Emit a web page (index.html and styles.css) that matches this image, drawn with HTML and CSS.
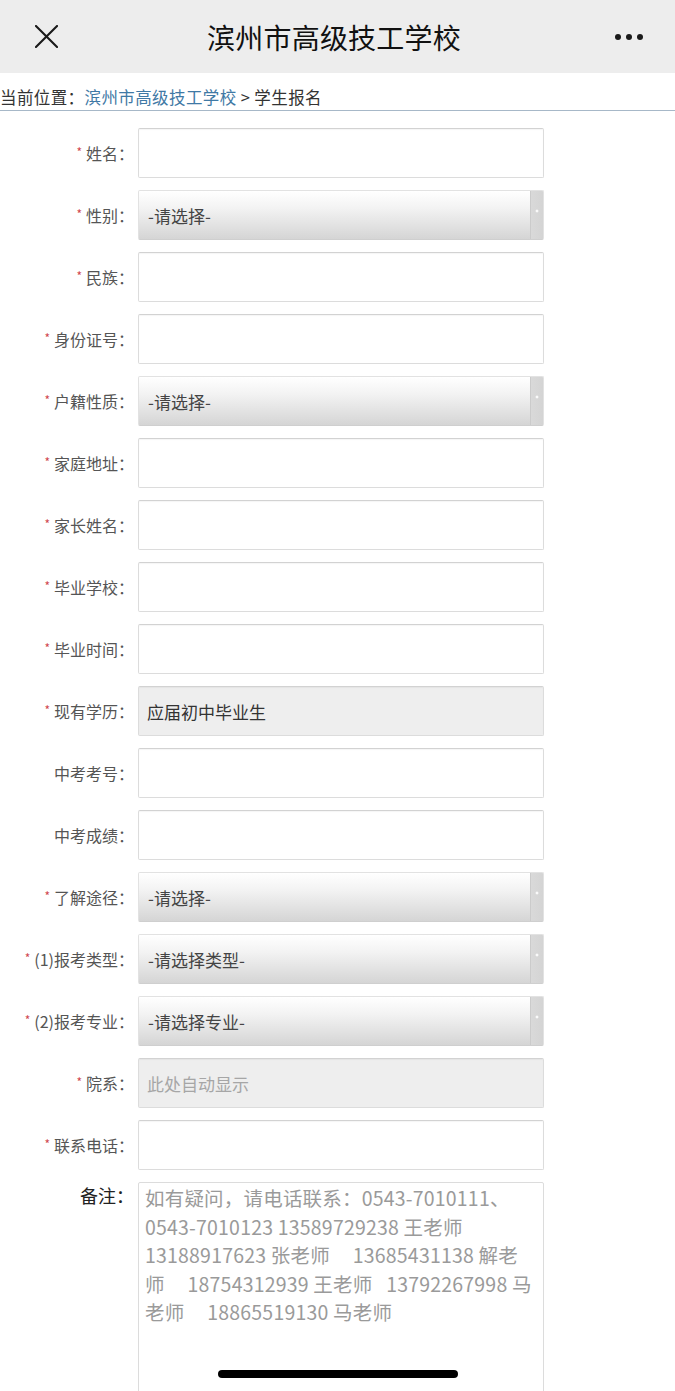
FILE: index.html
```html
<!DOCTYPE html>
<html lang="zh-CN">
<head>
<meta charset="utf-8">
<title>滨州市高级技工学校</title>
<link rel="stylesheet" href="styles.css">
</head>
<body>
<header class="topbar">
  <svg class="close" viewBox="0 0 24 24" width="24" height="24"><path d="M1 1 L23 23 M23 1 L1 23" stroke="#1a1a1a" stroke-width="2.2" fill="none" stroke-linecap="round"/></svg>
  <h1 class="title">滨州市高级技工学校</h1>
  <svg class="more" viewBox="0 0 30 8" width="30" height="8"><circle cx="4" cy="4" r="3" fill="#1a1a1a"/><circle cx="15" cy="4" r="3" fill="#1a1a1a"/><circle cx="26" cy="4" r="3" fill="#1a1a1a"/></svg>
</header>
<nav class="crumb">当前位置：<a class="crumb-link">滨州市高级技工学校</a> &gt; 学生报名</nav>
<form class="form">
  <div class="row"><label class="lbl"><span class="req">*</span>姓名：</label><input class="inp" type="text"></div>
  <div class="row"><label class="lbl"><span class="req">*</span>性别：</label><div class="sel">-请选择-</div></div>
  <div class="row"><label class="lbl"><span class="req">*</span>民族：</label><input class="inp" type="text"></div>
  <div class="row"><label class="lbl"><span class="req">*</span>身份证号：</label><input class="inp" type="text"></div>
  <div class="row"><label class="lbl"><span class="req">*</span>户籍性质：</label><div class="sel">-请选择-</div></div>
  <div class="row"><label class="lbl"><span class="req">*</span>家庭地址：</label><input class="inp" type="text"></div>
  <div class="row"><label class="lbl"><span class="req">*</span>家长姓名：</label><input class="inp" type="text"></div>
  <div class="row"><label class="lbl"><span class="req">*</span>毕业学校：</label><input class="inp" type="text"></div>
  <div class="row"><label class="lbl"><span class="req">*</span>毕业时间：</label><input class="inp" type="text"></div>
  <div class="row"><label class="lbl"><span class="req">*</span>现有学历：</label><div class="inp ro">应届初中毕业生</div></div>
  <div class="row"><label class="lbl">中考考号：</label><input class="inp" type="text"></div>
  <div class="row"><label class="lbl">中考成绩：</label><input class="inp" type="text"></div>
  <div class="row"><label class="lbl"><span class="req">*</span>了解途径：</label><div class="sel">-请选择-</div></div>
  <div class="row"><label class="lbl"><span class="req">*</span>(1)报考类型：</label><div class="sel">-请选择类型-</div></div>
  <div class="row"><label class="lbl"><span class="req">*</span>(2)报考专业：</label><div class="sel">-请选择专业-</div></div>
  <div class="row"><label class="lbl"><span class="req">*</span>院系：</label><div class="inp ro ph">此处自动显示</div></div>
  <div class="row"><label class="lbl"><span class="req">*</span>联系电话：</label><input class="inp" type="text"></div>
  <div class="row row-top"><label class="lbl lbl-note">备注：</label><div class="note">如有疑问，请电话联系：0543-7010111、
0543-7010123 13589729238 王老师
13188917623 张老师     13685431138 解老
师     18754312939 王老师   13792267998 马
老师     18865519130 马老师</div></div>
</form>
<div class="home-bar"></div>
</body>
</html>
```

FILE: styles.css
```css
html, body {
  margin: 0;
  padding: 0;
  overflow: hidden;
  background: #fff;
}
body {
  font-family: "Noto Sans CJK SC", "Noto Sans", sans-serif;
  color: #333;
}
.topbar {
  height: 73px;
  background: #ededed;
  display: flex;
  align-items: center;
  justify-content: space-between;
  padding: 0 31px 0 35px;
  box-sizing: border-box;
}
.close {
  width: 23px;
  height: 23px;
}
.title {
  margin: 0;
  font-size: 28px;
  font-weight: 400;
  color: #111;
  line-height: 1;
  padding-right: 4px;
  letter-spacing: 0.2px;
}
.more {
  width: 30px;
  height: 8px;
}
.crumb {
  font-size: 16.5px;
  line-height: 20px;
  color: #333;
  padding: 14px 0 3px 0;
  border-bottom: 1px solid #a7b8c8;
  letter-spacing: 0.4px;
}
.crumb-link {
  color: #3f79a5;
}
.form {
  display: flex;
  flex-direction: column;
  gap: 12px;
  padding-top: 17px;
}
.row {
  display: flex;
  align-items: center;
  height: 50px;
}
.row-top {
  align-items: flex-start;
  height: auto;
}
.lbl {
  width: 138px;
  box-sizing: border-box;
  padding-right: 4px;
  text-align: right;
  font-size: 16px;
  color: #555;
  white-space: nowrap;
}
.req {
  color: #d0484f;
  font-size: 12px;
  vertical-align: 3px;
  margin-right: 4px;
}
.inp {
  width: 406px;
  height: 50px;
  box-sizing: border-box;
  border: 1px solid #dcdcdc;
  border-top-color: #d2d2d2;
  border-radius: 2px;
  background: #fff;
  box-shadow: inset 0 1px 1px rgba(0,0,0,0.04);
  padding: 0 8px;
  font-family: inherit;
  font-size: 17px;
  color: #333;
  margin: 0;
}
.ro {
  background: #eeeeee;
  display: flex;
  align-items: center;
}
.ph {
  color: #a6a6a6;
}
.sel {
  width: 406px;
  height: 50px;
  box-sizing: border-box;
  border: 1px solid #e2e2e2;
  border-bottom-color: #cfcfcf;
  border-radius: 2px;
  padding: 0 9px;
  display: flex;
  align-items: center;
  font-size: 17px;
  color: #444;
  background:
    radial-gradient(circle, #fafafa 0, #fafafa 1px, transparent 1.8px) no-repeat right 2px top 16px / 8px 8px,
    linear-gradient(to right, #cbcbcb 0, #cbcbcb 1px, #d9d9d9 1px, #d4d4d4 100%) no-repeat right top / 13px 100%,
    linear-gradient(#ffffff 0%, #f3f3f3 35%, #d5d5d5 100%);
}
.lbl-note {
  font-size: 18px;
  color: #222;
  line-height: 26px;
}
.note {
  width: 406px;
  height: 215px;
  box-sizing: border-box;
  border: 1px solid #dcdcdc;
  border-radius: 2px;
  padding: 1px 6px;
  font-size: 19.5px;
  letter-spacing: 0.2px;
  line-height: 28.5px;
  color: #9a9a9a;
  white-space: pre;
  overflow: hidden;
}
.home-bar {
  position: fixed;
  left: 50%;
  bottom: 13px;
  width: 240px;
  height: 8px;
  margin-left: -120px;
  border-radius: 4px;
  background: #000;
}
```
